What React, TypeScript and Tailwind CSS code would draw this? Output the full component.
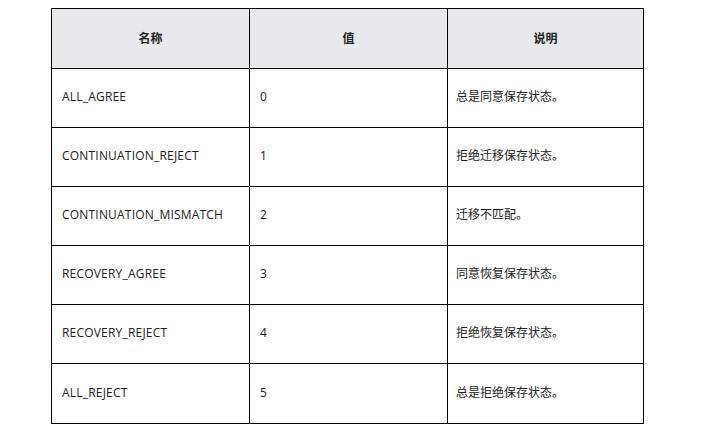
const rows = [
  { name: "ALL_AGREE", value: "0", desc: "总是同意保存状态。" },
  { name: "CONTINUATION_REJECT", value: "1", desc: "拒绝迁移保存状态。" },
  { name: "CONTINUATION_MISMATCH", value: "2", desc: "迁移不匹配。" },
  { name: "RECOVERY_AGREE", value: "3", desc: "同意恢复保存状态。" },
  { name: "RECOVERY_REJECT", value: "4", desc: "拒绝恢复保存状态。" },
  { name: "ALL_REJECT", value: "5", desc: "总是拒绝保存状态。" },
];

export default function App() {
  return (
    <div className="w-[711px] h-[435px] bg-white pl-[51px] pt-[8px] font-['Open_Sans','Noto_Sans_CJK_SC',sans-serif] text-[12px] text-[#222]">
      <table className="w-[593px] border-collapse table-fixed">
        <thead>
          <tr className="h-[60px] bg-[#e8e9ed]">
            <th className="w-[198px] border border-black font-bold text-center">名称</th>
            <th className="w-[198px] border border-black font-bold text-center">值</th>
            <th className="border border-black font-bold text-center">说明</th>
          </tr>
        </thead>
        <tbody>
          {rows.map((r, i) => (
            <tr key={r.name} className={i === 5 ? "h-[60px]" : "h-[59px]"}>
              <td className="border border-black px-[10px] pb-[2px] align-middle tracking-[0.2px]">{r.name}</td>
              <td className="border border-black px-[10px] pb-[2px] align-middle">{r.value}</td>
              <td className="border border-black px-[8px] pb-[2px] align-middle">{r.desc}</td>
            </tr>
          ))}
        </tbody>
      </table>
    </div>
  );
}
